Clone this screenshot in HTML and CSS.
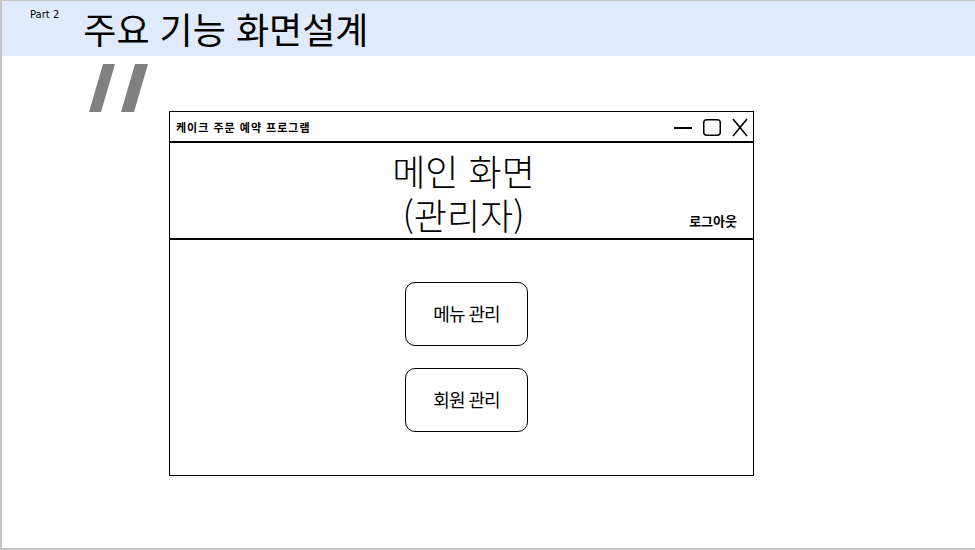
FILE: index.html
```html
<!DOCTYPE html>
<html lang="ko">
<head>
  <meta charset="UTF-8">
  <meta name="viewport" content="width=device-width, initial-scale=1.0">
  <title>주요 기능 화면설계</title>
  <link rel="stylesheet" href="styles.css">
</head>
<body>

  <div class="slide">
    <div class="slide-header">
      <span class="part-label">Part 2</span>
      <h1>주요 기능 화면설계</h1>
    </div>

    <div class="slide-body">
      <!-- decorative quote mark -->
      <svg class="quote-mark" width="64" height="52" viewBox="87 62 64 52">
        <polygon points="103,64 115,64 101,112 89,112" fill="#808080" />
        <polygon points="135,64 148,64 134,112 121,112" fill="#808080" />
      </svg>

      <div class="window">
        <div class="window-titlebar">
          <span class="window-title">케이크 주문 예약 프로그램</span>
          <div class="window-controls">
            <svg width="20" height="20" viewBox="0 0 20 20">
              <line x1="1" y1="11" x2="19" y2="11" stroke="#000" stroke-width="2" />
            </svg>
            <svg width="20" height="20" viewBox="0 0 20 20">
              <rect x="1.75" y="2.75" width="16.5" height="15.5" rx="3" fill="none" stroke="#000" stroke-width="1.5" />
            </svg>
            <svg width="18" height="20" viewBox="0 0 18 20">
              <line x1="2" y1="2" x2="16" y2="19" stroke="#000" stroke-width="1.6" />
              <line x1="16" y1="2" x2="2" y2="19" stroke="#000" stroke-width="1.6" />
            </svg>
          </div>
        </div>

        <div class="window-header">
          <div class="screen-name">메인 화면</div>
          <div class="screen-name">(관리자)</div>
          <a class="logout-link" href="#">로그아웃</a>
        </div>

        <div class="window-content">
          <button class="menu-button">메뉴 관리</button>
          <button class="menu-button">회원 관리</button>
        </div>
      </div>
    </div>
  </div>

</body>
</html>
```

FILE: styles.css
```css
body {
  margin: 0;
  padding: 0;
  font-family: "Noto Sans CJK KR", "Noto Sans", sans-serif;
  background-color: #fff;
  overflow: hidden;
}
.slide {
  height: 547px;
  border-top: 1px solid #c6c6c6;
  border-left: 2px solid #c6c6c6;
  border-bottom: 2px solid #c6c6c6;
  background-color: #fff;
}
.slide-header {
  display: flex;
  align-items: flex-start;
  height: 55px;
  background-color: #dfebfd;
}
.part-label {
  margin: 8px 0 0 28px;
  font-family: "DejaVu Sans", sans-serif;
  font-size: 10px;
  color: #000;
}
.slide-header h1 {
  margin: 0 0 0 24px;
  font-size: 36px;
  font-weight: 400;
  line-height: 55px;
  color: #000;
}
.slide-body {
  position: relative;
  padding: 55px 0 0 167px;
}
.quote-mark {
  position: absolute;
  left: 85px;
  top: 6px;
}
.window {
  width: 583px;
  height: 363px;
  border: 1px solid #000;
  display: flex;
  flex-direction: column;
}
.window-titlebar {
  display: flex;
  justify-content: space-between;
  align-items: center;
  height: 29px;
  padding: 0 4px 0 6px;
  border-bottom: 2px solid #000;
}
.window-title {
  font-size: 11px;
  font-weight: 700;
  letter-spacing: 1px;
}
.window-controls {
  display: flex;
  align-items: center;
  gap: 9px;
}
.window-header {
  position: relative;
  height: 90px;
  padding-top: 5px;
  border-bottom: 2px solid #000;
  text-align: center;
}
.screen-name {
  padding-left: 4px;
  font-size: 36px;
  font-weight: 300;
  line-height: 44px;
  height: 44px;
}
.logout-link {
  position: absolute;
  right: 16px;
  bottom: 8px;
  font-size: 13px;
  font-weight: 700;
  line-height: 18px;
  color: #000;
  text-decoration: none;
}
.window-content {
  display: flex;
  flex-direction: column;
  align-items: center;
  gap: 22px;
  padding: 42px 0 0 10px;
}
.menu-button {
  width: 123px;
  height: 64px;
  padding-bottom: 4px;
  border: 1px solid #000;
  border-radius: 10px;
  background-color: #fff;
  font-family: "Noto Sans CJK KR", sans-serif;
  font-size: 18px;
  letter-spacing: -1px;
  color: #000;
  cursor: pointer;
}
```
